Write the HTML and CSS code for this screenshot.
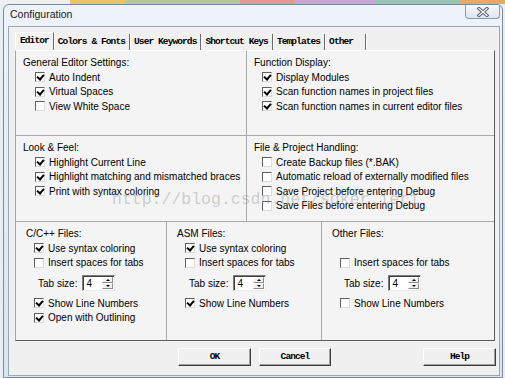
FILE: index.html
```html
<!DOCTYPE html>
<html>
<head>
  <meta charset="utf-8">
  <title>Configuration</title>
  <link rel="stylesheet" href="styles.css">
</head>
<body>
  <div class="desktop-strip"></div>
  <div class="window">
    <div class="titlebar">
      <span class="title">Configuration</span>
      <div class="close">
        <svg width="14" height="10" viewBox="0 0 14 10">
          <path d="M3 1.5 L11 8.5 M11 1.5 L3 8.5" stroke="#5a6470" stroke-width="3.2" stroke-linecap="square"/>
          <path d="M3 1.5 L11 8.5 M11 1.5 L3 8.5" stroke="#ffffff" stroke-width="1.2" stroke-linecap="square"/>
        </svg>
      </div>
    </div>

    <div class="client">
      <div class="tabs">
        <div class="tab active">Editor</div>
        <div class="tab">Colors &amp; Fonts</div>
        <div class="tab">User Keywords</div>
        <div class="tab">Shortcut Keys</div>
        <div class="tab">Templates</div>
        <div class="tab tab-last">Other</div>
      </div>

      <div class="page">
        <div class="page-top">
          <div class="group group-split">
            <div class="group-title">General Editor Settings:</div>
            <div class="opt opt-wide"><span class="box on"></span>Auto Indent</div>
            <div class="opt opt-wide"><span class="box on"></span>Virtual Spaces</div>
            <div class="opt opt-wide"><span class="box"></span>View White Space</div>
          </div>
          <div class="group">
            <div class="group-title">Function Display:</div>
            <div class="opt"><span class="box on"></span>Display Modules</div>
            <div class="opt"><span class="box on"></span>Scan function names in project files</div>
            <div class="opt"><span class="box on"></span>Scan function names in current editor files</div>
          </div>
          <div class="group group-split">
            <div class="group-title">Look &amp; Feel:</div>
            <div class="opt opt-wide"><span class="box on"></span>Highlight Current Line</div>
            <div class="opt opt-wide"><span class="box on"></span>Highlight matching and mismatched braces</div>
            <div class="opt opt-wide"><span class="box on"></span>Print with syntax coloring</div>
          </div>
          <div class="group">
            <div class="group-title">File &amp; Project Handling:</div>
            <div class="opt"><span class="box"></span>Create Backup files (*.BAK)</div>
            <div class="opt"><span class="box"></span>Automatic reload of externally modified files</div>
            <div class="opt"><span class="box"></span>Save Project before entering Debug</div>
            <div class="opt"><span class="box"></span>Save Files before entering Debug</div>
          </div>
        </div>

        <div class="page-bottom">
          <div class="files group-split">
            <div class="group-title">C/C++ Files:</div>
            <div class="opt"><span class="box on"></span>Use syntax coloring</div>
            <div class="opt"><span class="box"></span>Insert spaces for tabs</div>
            <div class="tabsize">
              <span class="tabsize-label">Tab size:</span>
              <div class="spin"><span class="spin-value">4</span><span class="spin-arrows"><span class="arrow up"></span><span class="arrow down"></span></span></div>
            </div>
            <div class="opt"><span class="box on"></span>Show Line Numbers</div>
            <div class="opt"><span class="box on"></span>Open with Outlining</div>
          </div>
          <div class="files group-split">
            <div class="group-title">ASM Files:</div>
            <div class="opt"><span class="box on"></span>Use syntax coloring</div>
            <div class="opt"><span class="box"></span>Insert spaces for tabs</div>
            <div class="tabsize">
              <span class="tabsize-label">Tab size:</span>
              <div class="spin"><span class="spin-value">4</span><span class="spin-arrows"><span class="arrow up"></span><span class="arrow down"></span></span></div>
            </div>
            <div class="opt"><span class="box on"></span>Show Line Numbers</div>
          </div>
          <div class="files">
            <div class="group-title">Other Files:</div>
            <div class="opt"></div>
            <div class="opt"><span class="box"></span>Insert spaces for tabs</div>
            <div class="tabsize">
              <span class="tabsize-label">Tab size:</span>
              <div class="spin"><span class="spin-value">4</span><span class="spin-arrows"><span class="arrow up"></span><span class="arrow down"></span></span></div>
            </div>
            <div class="opt"><span class="box"></span>Show Line Numbers</div>
          </div>
        </div>
      </div>

      <div class="buttons">
        <div class="btn">OK</div>
        <div class="btn btn-narrow">Cancel</div>
        <div class="btn btn-help">Help</div>
      </div>
    </div>

    <div class="watermark">http://blog.csdn.net/sdker.ier1</div>
  </div>
</body>
</html>
```

FILE: styles.css
```css
* {
  box-sizing: border-box;
}

body {
  margin: 0;
  width: 505px;
  height: 378px;
  overflow: hidden;
  background: #e6eef6;
  font-family: "Liberation Sans Narrow", "Liberation Sans", Arial, sans-serif;
  font-size: 10px;
  color: #000;
}

/* bit of desktop showing above the window */
.desktop-strip {
  height: 4px;
  background: linear-gradient(90deg, #eef0f0 0 70px, #e8c46a 70px 125px, #b8c6a0 125px 240px, #e09a98 240px 295px, #c4a6d4 295px 375px, #98c4b4 375px 460px, #e8a868 460px);
}

.window {
  position: relative;
  margin-left: 3px;
  width: 500px;
  height: 374px;
  border: 1px solid #7d8a99;
  border-radius: 6px 6px 0 0;
  background: linear-gradient(#edf3f9, #d9e5f1);
  display: flex;
  flex-direction: column;
}

.titlebar {
  height: 21px;
  display: flex;
  align-items: flex-start;
  padding-left: 6px;
}

.title {
  font-family: "Liberation Sans", Arial, sans-serif;
  font-size: 10.5px;
  line-height: 19px;
  color: #1a1a1a;
}

.close {
  margin-left: auto;
  margin-right: 2px;
  width: 35px;
  height: 14px;
  border: 1px solid #8a97a8;
  border-top: none;
  border-radius: 0 0 4px 4px;
  background: linear-gradient(#f7f9fc, #dde6f0);
  display: flex;
  align-items: center;
  justify-content: center;
}

.client {
  margin: 0 2px 0 4px;
  height: 350px;
  border: 1px solid #9aa6b4;
  background: #f0f0f0;
  padding: 5px 4px 0 6px;
}

.tabs {
  display: flex;
  align-items: flex-end;
  height: 18px;
}

.tab {
  height: 16px;
  padding: 0 4px;
  border-right: 1px solid #6a6a6a;
  box-shadow: 1px 0 0 #ffffff;
  font-family: "Liberation Mono", monospace;
  font-weight: bold;
  font-size: 9.5px;
  letter-spacing: -0.9px;
  line-height: 15px;
  white-space: nowrap;
}

.tab.active {
  height: 18px;
  line-height: 15px;
  border-left: 1px solid #ffffff;
  border-top: 1px solid #ffffff;
  background: #f2f2f2;
}

.tab-last {
  padding-right: 12px;
}

.page {
  height: 291px;
  border: 1px solid;
  border-color: #ffffff #5c5c5c #5c5c5c #a4a4a4;
  background: #f4f4f4;
  display: flex;
  flex-direction: column;
}

.page-top {
  display: grid;
  grid-template-columns: 231px 1fr;
  grid-template-rows: 85px 86px;
}

.group {
  padding: 5px 0 0 7px;
  border-bottom: 1px solid #a9a9a9;
}

.group-split {
  border-right: 1px solid #a9a9a9;
}

.group-title {
  line-height: 14px;
  white-space: nowrap;
}

.opt {
  display: flex;
  align-items: center;
  height: 14.5px;
  padding-left: 8px;
  white-space: nowrap;
}

.opt-wide {
  padding-left: 12px;
}

.box {
  position: relative;
  flex: none;
  width: 10px;
  height: 10px;
  margin-right: 4px;
  border: 1px solid;
  border-color: #5f5f5f #dcdcdc #dcdcdc #5f5f5f;
  background: #ffffff;
}

.box.on::after {
  content: "";
  position: absolute;
  left: 2px;
  top: 0;
  width: 3px;
  height: 5px;
  border: solid #000;
  border-width: 0 2px 2px 0;
  transform: rotate(40deg);
}

.page-bottom {
  flex: 1;
  display: grid;
  grid-template-columns: 151px 155px 1fr;
}

.files {
  padding: 5px 0 0 10px;
}

.tabsize {
  display: flex;
  align-items: center;
  height: 16px;
  margin: 5px 0 5px 12px;
}

.tabsize-label {
  white-space: nowrap;
}

.spin {
  display: flex;
  width: 33px;
  height: 16px;
  margin-left: 5px;
  border: 1px solid;
  border-color: #7c7c7c #ececec #ececec #7c7c7c;
  box-shadow: inset 1px 1px 0 #404040;
  background: #ffffff;
}

.spin-value {
  flex: 1;
  padding: 1px 0 0 3px;
  line-height: 13px;
}

.spin-arrows {
  display: flex;
  flex-direction: column;
  width: 11px;
  margin: 1px 1px 1px 0;
}

.arrow {
  flex: 1;
  display: flex;
  align-items: center;
  justify-content: center;
  background: #f0f0f0;
  border: 1px solid;
  border-color: #ffffff #8a8a8a #8a8a8a #ffffff;
}

.arrow::before {
  content: "";
  border-left: 2px solid transparent;
  border-right: 2px solid transparent;
}

.arrow.up::before {
  border-bottom: 2px solid #000;
}

.arrow.down::before {
  border-top: 2px solid #000;
}

.buttons {
  display: flex;
  margin-top: 7px;
  padding-left: 163px;
}

.btn {
  width: 73px;
  height: 18px;
  margin-right: 8px;
  border: 1px solid;
  border-color: #ffffff #3c3c3c #3c3c3c #ffffff;
  box-shadow: inset -1px -1px 0 #a0a0a0;
  background: #f0f0f0;
  font-family: "Liberation Mono", monospace;
  font-weight: bold;
  font-size: 9.5px;
  letter-spacing: -0.9px;
  line-height: 16px;
  text-align: center;
}

.btn-narrow {
  width: 72px;
}

.btn-help {
  margin-left: auto;
  margin-right: -1px;
}

.watermark {
  position: absolute;
  left: 108px;
  top: 187px;
  font-family: "Liberation Mono", monospace;
  font-size: 16.5px;
  line-height: 1;
  color: rgba(140, 140, 140, 0.4);
  white-space: nowrap;
  pointer-events: none;
}
```
